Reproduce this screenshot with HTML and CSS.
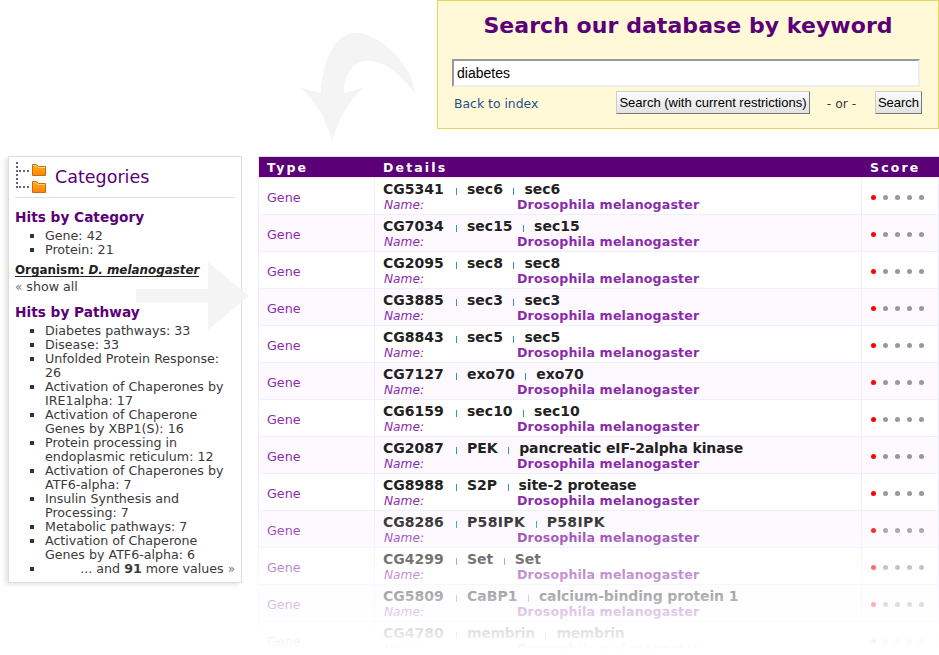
FILE: index.html
```html
<!DOCTYPE html>
<html lang="en">
<head>
<meta charset="utf-8">
<title>Search our database by keyword</title>
<link rel="stylesheet" href="styles.css">
</head>
<body>
<div class="page">
  <header class="top">
    <form class="search">
      <h1>Search our database by keyword</h1>
      <input class="query" type="text" value="diabetes">
      <div class="actions">
        <a class="back">Back to index</a>
        <button class="btn wide" type="button"><span>Search (with current restrictions)</span></button>
        <span class="or">- or -</span>
        <button class="btn" type="button"><span>Search</span></button>
      </div>
    </form>
  </header>
  <main class="main">
    <aside class="side">
      <div class="side-head">
        <svg width="32" height="32" viewBox="0 0 32 32">
          <defs><linearGradient id="f" x1="0" y1="0" x2="0" y2="1"><stop offset="0" stop-color="#ffb020"/><stop offset="1" stop-color="#ff8205"/></linearGradient></defs>
          <path d="M2 0V26M4 9H16M4 25H16" fill="none" stroke="#666" stroke-width="2" stroke-dasharray="2 2"/>
          <g fill="url(#f)" stroke="#c96a10">
            <path d="M17.500 2.500h4l2 2h7v9h-13z"/><path d="M17.500 19.500h4l2 2h7v9h-13z"/>
          </g>
          <path d="M18 3.500h3l2 2h7M18 20.500h3l2 2h7" fill="none" stroke="#ffd27a"/>
        </svg>
        <h2>Categories</h2>
      </div>
      <h3>Hits by Category</h3>
      <ul>
        <li>Gene: 42</li>
        <li>Protein: 21</li>
      </ul>
      <p class="organism"><span>Organism: <em>D. melanogaster</em></span></p>
      <p class="all"><small>«</small> show all</p>
      <h3 class="pathway">Hits by Pathway</h3>
      <ul>
        <li>Diabetes pathways: 33</li>
        <li>Disease: 33</li>
        <li>Unfolded Protein Response:<br>26</li>
        <li>Activation of Chaperones by<br>IRE1alpha: 17</li>
        <li>Activation of Chaperone<br>Genes by XBP1(S): 16</li>
        <li>Protein processing in<br>endoplasmic reticulum: 12</li>
        <li>Activation of Chaperones by<br>ATF6-alpha: 7</li>
        <li>Insulin Synthesis and<br>Processing: 7</li>
        <li>Metabolic pathways: 7</li>
        <li>Activation of Chaperone<br>Genes by ATF6-alpha: 6</li>
        <li class="more">... and <b>91</b> more values <small>»</small></li>
      </ul>
    </aside>
    <section class="results">
      <div class="row head"><span>Type</span><span>Details</span><span>Score</span></div>
      <div id="rows"></div>
    </section>
  </main>
  <svg class="arrows" width="939" height="655" viewBox="0 0 939 655">
    <path d="M332.300 141.500C327 121 316 100 299.500 87.500L320.700 93C323 62 333 33 356 33C380 33 413 65 415 94.300C404 77 385 60.700 367.500 60.700C352 60.700 344 76 343.700 93L364.500 87.500C350 98 337 122 332.300 141.500Z"/>
    <path d="M136 289H208V262L249 296L208 330V302.500H136Z"/>
  </svg>
  <div class="fade"></div>
</div>
<script src="rows.js"></script>
</body>
</html>
```
FILE: rows.js
```js
const genes = [
  ["CG5341", "sec6", "sec6"],
  ["CG7034", "sec15", "sec15"],
  ["CG2095", "sec8", "sec8"],
  ["CG3885", "sec3", "sec3"],
  ["CG8843", "sec5", "sec5"],
  ["CG7127", "exo70", "exo70"],
  ["CG6159", "sec10", "sec10"],
  ["CG2087", "PEK", "pancreatic eIF-2alpha kinase"],
  ["CG8988", "S2P", "site-2 protease"],
  ["CG8286", "P58IPK", "P58IPK"],
  ["CG4299", "Set", "Set"],
  ["CG5809", "CaBP1", "calcium-binding protein 1"],
  ["CG4780", "membrin", "membrin"]
];
const fit = t => t === "P58IPK" ? "loose" : t === "membrin" ? "tight" : t.length > 8 ? "long" : "";
document.getElementById("rows").innerHTML = genes.map(g => `
  <div class="row">
    <span class="type">Gene</span>
    <div class="details">
      <div class="title">${g.map(t => `<b class="${fit(t)}">${t}</b>`).join("<i></i>")}</div>
      <div class="name"><em>Name:</em><strong>Drosophila melanogaster</strong></div>
    </div>
    <div class="score"><i></i><i></i><i></i><i></i><i></i></div>
  </div>`).join("");
```
FILE: styles.css
```css
* { box-sizing: border-box; }
body { margin: 0; background: #fff; font-family: "DejaVu Sans", Verdana, sans-serif; color: #3a3a3a; }
.page { position: relative; width: 939px; height: 655px; overflow: hidden; }
h1, h2, h3, p, ul { margin: 0; padding: 0; }
.top { height: 156px; padding-left: 437px; }
.search { width: 502px; height: 129px; background: #fff9d7; border: 1px solid #e2d65c; padding: 0 16px 0 14px; }
h1 { height: 58px; line-height: 50px; padding-left: 2px; font-size: 22px; letter-spacing: 0.06px; text-align: center; color: #5c0078; white-space: nowrap; }
.query { display: block; width: 468px; height: 28px; border: 2px solid; border-color: #999 #eee #eee #999; padding: 0 3px; font: 14px "Liberation Sans", sans-serif; color: #000; background: #fff; outline: none; }
.actions { display: flex; align-items: center; margin-top: 4px; width: 470px; height: 23px; font-size: 12.4px; white-space: nowrap; }
.back { width: 164px; padding: 1px 0 0 2px; color: #1c4f8c; }
.btn { width: 47px; height: 23px; padding: 0; border: 1px solid; border-color: #ccc #777 #777 #ccc; background: linear-gradient(#fcfcfc, #e2e2e2); font: 13px "Liberation Sans", sans-serif; color: #000; }
.btn.wide { width: 194px; }
.or { width: 65px; padding: 1px 2px 0 0; text-align: center; }
.main { display: flex; }
.side { width: 234px; height: 427px; margin-left: 8px; padding: 0 6px; background: #fff; border: 1px solid #ddd; box-shadow: -3px 2px 4px rgba(0,0,0,.1); font-size: 12.65px; line-height: 14px; white-space: nowrap; }
.side-head { display: flex; height: 41px; border-bottom: 1px solid #ddd; padding-top: 5px; }
.side-head h2 { margin-left: 8px; font-size: 17.5px; line-height: 31px; font-weight: 400; color: #5c0078; }
.side h3 { font-size: 13.7px; line-height: 18px; height: 21px; color: #5c0078; }
.side-head + h3 { margin-top: 10px; }
.side ul { list-style: none; padding-left: 30px; }
.side li { position: relative; }
.side li::before { content: ""; position: absolute; left: -15px; top: 5px; width: 4px; height: 4px; background: #333; }
.side small { font-size: 12px; color: #777; }
.organism { height: 21px; padding-top: 6px; font-weight: 700; font-size: 11.9px; color: #222; }
.organism span { display: inline-block; height: 14px; border-bottom: 1px solid #222; }
.all { height: 25px; padding-top: 2px; }
.side li.more { text-align: right; }
.results { width: 681px; margin-left: 16px; border-left: 1px solid #f0edff; }
.row { display: grid; grid-template: 37px / 116px 487px 77px; height: 37px; }
.row > * { border-bottom: 1px solid #f0edff; border-right: 1px solid #f0edff; padding-left: 8px; }
#rows .row:nth-child(even) { background: #fdf9ff; }
.row.head { grid-template-rows: 20px; height: 22px; border-top: 1px solid #ddd; border-bottom: 1px solid #eee8f2; background: #5c0078; background-clip: padding-box; color: #fff; font-weight: 700; font-size: 12.5px; line-height: 21px; letter-spacing: 2.15px; }
.row.head > * { border: 0; }
.type { font-size: 12.7px; line-height: 39px; height: 37px; color: #8b2bab; }
.title { display: flex; align-items: center; height: 17px; padding-top: 4px; font-size: 14px; line-height: 18px; color: #222; white-space: nowrap; }
.title i { flex: none; width: 1px; height: 7px; margin: 5px 10px 0 11px; background: #2a95c8; }
.title i:last-of-type { margin: 5px 10px 0 10.500px; }
.title b:first-child { width: 62px; }
.title .long { letter-spacing: -0.13px; }
.title .loose { letter-spacing: 0.35px; }
.title .tight { letter-spacing: -0.35px; }
.name { display: flex; height: 18px; padding-top: 1px; font-size: 12.6px; line-height: 18px; color: #8b2bab; white-space: nowrap; }
.name em { width: 134px; padding-left: 1px; font-size: 12.2px; }
.name strong { letter-spacing: 0.15px; }
.score { display: flex; gap: 7px; padding-top: 17px; }
.row .score { padding-left: 9px; }
.score i { width: 5px; height: 5px; border-radius: 50%; background: #999; }
.score i:first-child { background: #f00; }
.arrows { position: absolute; left: 0; top: 0; fill: #f4f4f4; pointer-events: none; }
.fade { position: absolute; left: 243px; right: 0; top: 505px; height: 150px; background: linear-gradient(rgba(255,255,255,0), #fff 97%); }
```
